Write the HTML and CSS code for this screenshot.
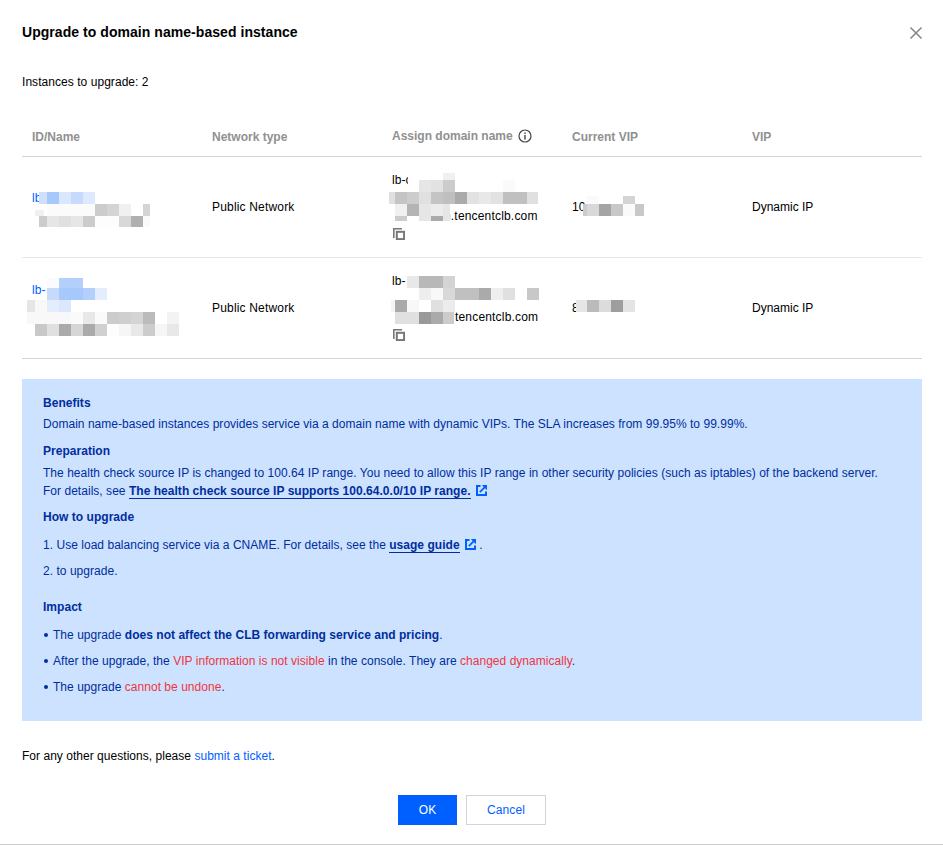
FILE: index.html
```html
<!DOCTYPE html>
<html lang="en">
<head>
<meta charset="utf-8">
<title>Upgrade to domain name-based instance</title>
<link rel="stylesheet" href="styles.css">
</head>
<body>
<main class="dialog">
  <header class="dialog-head">
    <h1 class="dialog-title">Upgrade to domain name-based instance</h1>
    <button class="close" aria-label="Close">
      <svg width="14" height="14" viewBox="0 0 14 14"><path d="M1.5 1.5l11 11M12.5 1.5l-11 11" stroke="#888" stroke-width="1.6" fill="none"/></svg>
    </button>
  </header>
  <p class="count">Instances to upgrade: 2</p>

  <table class="grid">
    <colgroup><col class="c"><col class="c"><col class="c"><col class="c"><col class="c"></colgroup>
    <thead>
      <tr>
        <th>ID/Name</th>
        <th>Network type</th>
        <th><span class="th-help">Assign domain name
          <svg width="14" height="14" viewBox="0 0 14 14"><circle cx="7" cy="7" r="6" fill="none" stroke="#444" stroke-width="1.2"/><rect x="6.3" y="6" width="1.4" height="4.6" fill="#444"/><rect x="6.3" y="3.4" width="1.4" height="1.5" fill="#444"/></svg></span></th>
        <th>Current VIP</th>
        <th>VIP</th>
      </tr>
    </thead>
    <tbody>
      <tr>
        <td><a class="link" href="#">lb</a><br>&nbsp;</td>
        <td class="wide">Public Network</td>
        <td class="domain">lb-c<br>&nbsp;<br><span class="gap gap-a"></span><span class="wide">n.tencentclb.com</span><br>
          <svg class="copy" width="12" height="12" viewBox="0 0 12 12"><path d="M0.8 10V0.8H9" fill="none" stroke="#777" stroke-width="1.6"/><rect x="3.8" y="3.8" width="7.3" height="7.3" fill="none" stroke="#777" stroke-width="2"/></svg>
        </td>
        <td>10</td>
        <td class="tight">Dynamic IP</td>
      </tr>
      <tr>
        <td><a class="link" href="#">lb-</a><br>&nbsp;<br>&nbsp;</td>
        <td class="wide">Public Network</td>
        <td class="domain">lb-<br>&nbsp;<br><span class="gap gap-b"></span><span class="wide">tencentclb.com</span><br>
          <svg class="copy" width="12" height="12" viewBox="0 0 12 12"><path d="M0.8 10V0.8H9" fill="none" stroke="#777" stroke-width="1.6"/><rect x="3.8" y="3.8" width="7.3" height="7.3" fill="none" stroke="#777" stroke-width="2"/></svg>
        </td>
        <td>8</td>
        <td class="tight">Dynamic IP</td>
      </tr>
    </tbody>
  </table>

  <section class="notice">
    <h2 class="n-title">Benefits</h2>
    <p class="n-first">Domain name-based instances provides service via a domain name with dynamic VIPs. The SLA increases from 99.95% to 99.99%.</p>
    <h2 class="n-title n-prep">Preparation</h2>
    <p class="n-health">The health check source IP is changed to 100.64 IP range. You need to allow this IP range in other security policies (such as iptables) of the backend server.<br>
    For details, see <a class="n-link" href="#">The health check source IP supports 100.64.0.0/10 IP range.</a>
    <svg class="ext" width="11" height="11" viewBox="0 0 11 11"><path d="M4.5 1H1v9h9V6.5" fill="none" stroke="#0060ff" stroke-width="2"/><path d="M3.8 7.2L8.8 2.2" fill="none" stroke="#0060ff" stroke-width="1.8"/><path d="M5.8 0h5.2v5.2z" fill="#0060ff"/></svg></p>
    <h2 class="n-title n-how">How to upgrade</h2>
    <p class="n-step1">1. Use load balancing service via a CNAME. For details, see the <a class="n-link" href="#">usage guide</a>
    <svg class="ext" width="11" height="11" viewBox="0 0 11 11"><path d="M4.5 1H1v9h9V6.5" fill="none" stroke="#0060ff" stroke-width="2"/><path d="M3.8 7.2L8.8 2.2" fill="none" stroke="#0060ff" stroke-width="1.8"/><path d="M5.8 0h5.2v5.2z" fill="#0060ff"/></svg> .</p>
    <p class="n-step2">2. to upgrade.</p>
    <h2 class="n-title n-impact">Impact</h2>
    <ul class="n-list">
      <li>The upgrade <strong>does not affect the CLB forwarding service and pricing</strong>.</li>
      <li>After the upgrade, the <span class="warn">VIP information is not visible</span> in the console. They are <span class="warn">changed dynamically</span>.</li>
      <li>The upgrade <span class="warn">cannot be undone</span>.</li>
    </ul>
  </section>

  <p class="help">For any other questions, please <a class="link" href="#">submit a ticket</a>.</p>

  <footer class="actions">
    <button class="btn btn-primary">OK</button>
    <button class="btn btn-ghost">Cancel</button>
  </footer>

  <svg class="mosaic" width="943" height="845" viewBox="0 0 943 845" aria-hidden="true" shape-rendering="crispEdges">
    <!-- row 1 id/name -->
    <rect x="39" y="192" width="8" height="12" fill="#cfe0fc"/><rect x="47" y="192" width="12" height="12" fill="#a6c8fb"/><rect x="59" y="192" width="12" height="12" fill="#dbe7fc"/><rect x="71" y="192" width="12" height="12" fill="#c6dbfb"/><rect x="83" y="192" width="12" height="12" fill="#dfe9fd"/>
    <rect x="47" y="204" width="48" height="12" fill="#fbfbfb"/><rect x="95" y="204" width="12" height="12" fill="#ccc"/><rect x="107" y="204" width="12" height="12" fill="#d4d4d4"/><rect x="119" y="204" width="12" height="12" fill="#f0f0f0"/><rect x="143" y="204" width="7" height="12" fill="#d4d4d4"/>
    <rect x="35" y="210" width="9" height="6" fill="#f0f0f0"/>
    <rect x="39" y="216" width="8" height="11" fill="#ccc"/><rect x="47" y="216" width="12" height="11" fill="#e6e6e6"/><rect x="59" y="216" width="12" height="11" fill="#e0e0e0"/><rect x="71" y="216" width="12" height="11" fill="#e6e6e6"/><rect x="83" y="216" width="12" height="11" fill="#ccc"/><rect x="95" y="216" width="24" height="11" fill="#fdfdfd"/><rect x="119" y="216" width="12" height="11" fill="#d8d8d8"/><rect x="131" y="216" width="12" height="11" fill="#b0b0b0"/><rect x="143" y="216" width="7" height="11" fill="#fafafa"/>
    <!-- row 2 id/name -->
    <rect x="47" y="278" width="12" height="10" fill="#fafaff"/><rect x="59" y="278" width="24" height="10" fill="#b3d0fc"/>
    <rect x="47" y="288" width="12" height="12" fill="#c6dbfb"/><rect x="59" y="288" width="24" height="12" fill="#a6c8fb"/><rect x="83" y="288" width="12" height="12" fill="#b3d0fc"/><rect x="95" y="288" width="12" height="12" fill="#e3edfd"/>
    <rect x="27" y="300" width="8" height="12" fill="#e6e6e6"/><rect x="35" y="300" width="12" height="12" fill="#f8f8f8"/><rect x="47" y="300" width="12" height="12" fill="#e3edfd"/><rect x="59" y="300" width="12" height="12" fill="#dbe7fc"/>
    <rect x="27" y="312" width="44" height="12" fill="#f8f8f8"/><rect x="71" y="312" width="12" height="12" fill="#fafafa"/><rect x="83" y="312" width="12" height="12" fill="#e8e8e8"/><rect x="95" y="312" width="12" height="12" fill="#fafafa"/><rect x="107" y="312" width="12" height="12" fill="#ccc"/><rect x="119" y="312" width="12" height="12" fill="#cfcfcf"/><rect x="131" y="312" width="12" height="12" fill="#d4d4d4"/><rect x="143" y="312" width="12" height="12" fill="#bbb"/><rect x="167" y="312" width="12" height="12" fill="#f3f3f3"/>
    <rect x="35" y="324" width="12" height="12" fill="#c8c8c8"/><rect x="47" y="324" width="12" height="12" fill="#e0e0e0"/><rect x="59" y="324" width="12" height="12" fill="#aaa"/><rect x="71" y="324" width="12" height="12" fill="#d6d6d6"/><rect x="83" y="324" width="12" height="12" fill="#aaa"/><rect x="95" y="324" width="12" height="12" fill="#d0d0d0"/><rect x="107" y="324" width="12" height="12" fill="#fdfdfd"/><rect x="119" y="324" width="12" height="12" fill="#f6f6f6"/><rect x="131" y="324" width="12" height="12" fill="#e8e8e8"/><rect x="143" y="324" width="12" height="12" fill="#ccc"/><rect x="155" y="324" width="12" height="12" fill="#f6f6f6"/><rect x="167" y="324" width="12" height="12" fill="#e8e8e8"/>
    <!-- row 1 domain -->
    <rect x="408" y="173" width="11" height="19" fill="#fff"/>
    <rect x="443" y="173" width="12" height="7" fill="#f0f0f0"/>
    <rect x="419" y="180" width="12" height="12" fill="#e6e6e6"/><rect x="431" y="180" width="12" height="12" fill="#e2e2e2"/><rect x="443" y="180" width="12" height="12" fill="#ccc"/><rect x="503" y="180" width="12" height="12" fill="#fafafa"/>
    <rect x="389" y="192" width="6" height="12" fill="#e0e0e0"/><rect x="395" y="192" width="12" height="12" fill="#c4c4c4"/><rect x="407" y="192" width="12" height="12" fill="#ccc"/><rect x="419" y="192" width="12" height="12" fill="#e0e0e0"/><rect x="431" y="192" width="12" height="12" fill="#c4c4c4"/><rect x="443" y="192" width="12" height="12" fill="#bfbfbf"/><rect x="455" y="192" width="12" height="12" fill="#aaa"/><rect x="467" y="192" width="12" height="12" fill="#e2e2e2"/><rect x="479" y="192" width="12" height="12" fill="#e8e8e8"/><rect x="491" y="192" width="12" height="12" fill="#e2e2e2"/><rect x="503" y="192" width="12" height="12" fill="#c0c0c0"/><rect x="515" y="192" width="12" height="12" fill="#c0c0c0"/><rect x="527" y="192" width="11" height="12" fill="#e0e0e0"/>
    <rect x="395" y="204" width="12" height="12" fill="#f0f0f0"/><rect x="407" y="204" width="12" height="12" fill="#b4b4b4"/><rect x="419" y="204" width="12" height="12" fill="#e6e6e6"/><rect x="431" y="204" width="12" height="12" fill="#ececec"/><rect x="443" y="204" width="7" height="12" fill="#e6e6e6"/>
    <rect x="395" y="216" width="12" height="5" fill="#ccc"/><rect x="407" y="216" width="12" height="5" fill="#fff"/><rect x="419" y="216" width="12" height="5" fill="#e6e6e6"/><rect x="431" y="216" width="12" height="5" fill="#aaa"/><rect x="443" y="216" width="7" height="5" fill="#e6e6e6"/>
    <rect x="443" y="221" width="7" height="4" fill="#fff"/>
    <!-- row 2 domain -->
    <rect x="407" y="276" width="12" height="12" fill="#e8e8e8"/><rect x="419" y="276" width="24" height="12" fill="#b8b8b8"/><rect x="443" y="276" width="12" height="12" fill="#d4d4d4"/>
    <rect x="407" y="288" width="12" height="12" fill="#fff"/><rect x="419" y="288" width="12" height="12" fill="#eee"/><rect x="431" y="288" width="12" height="12" fill="#f8f8f8"/><rect x="443" y="288" width="12" height="12" fill="#d8d8d8"/><rect x="455" y="288" width="24" height="12" fill="#c0c0c0"/><rect x="479" y="288" width="12" height="12" fill="#aaa"/><rect x="491" y="288" width="12" height="12" fill="#eee"/><rect x="503" y="288" width="12" height="12" fill="#e0e0e0"/><rect x="527" y="288" width="12" height="12" fill="#c8c8c8"/>
    <rect x="391" y="300" width="4" height="12" fill="#f4f4f4"/><rect x="395" y="300" width="12" height="12" fill="#aaa"/><rect x="407" y="300" width="12" height="12" fill="#f8f8f8"/><rect x="419" y="300" width="12" height="12" fill="#fff"/><rect x="431" y="300" width="12" height="12" fill="#e0e0e0"/><rect x="443" y="300" width="12" height="12" fill="#ececec"/>
    <rect x="395" y="312" width="24" height="12" fill="#e0e0e0"/><rect x="419" y="312" width="12" height="12" fill="#999"/><rect x="431" y="312" width="12" height="12" fill="#aaa"/><rect x="443" y="312" width="11" height="12" fill="#ccc"/>
    <!-- VIPs -->
    <rect x="587" y="196" width="12" height="8" fill="#fafafa"/><rect x="623" y="196" width="12" height="8" fill="#d4d4d4"/>
    <rect x="583" y="204" width="4" height="12" fill="#ccc"/><rect x="587" y="204" width="12" height="12" fill="#d8d8d8"/><rect x="599" y="204" width="12" height="12" fill="#a4a4a4"/><rect x="611" y="204" width="12" height="12" fill="#c8c8c8"/><rect x="623" y="204" width="12" height="12" fill="#fafafa"/><rect x="635" y="204" width="9" height="12" fill="#c8c8c8"/>
    <rect x="576" y="300" width="11" height="12" fill="#e6e6e6"/><rect x="587" y="300" width="12" height="12" fill="#bbb"/><rect x="599" y="300" width="12" height="12" fill="#dcdcdc"/><rect x="611" y="300" width="12" height="12" fill="#9e9e9e"/><rect x="623" y="300" width="12" height="12" fill="#e4e4e4"/>
  </svg>
</main>
</body>
</html>
```

FILE: styles.css
```css
* { box-sizing: border-box; }
html, body { margin: 0; height: 845px; overflow: hidden; background: #fff; }
body { font-family: "Liberation Sans", Arial, sans-serif; font-size: 12px; line-height: 18px; color: #000; letter-spacing: 0.05px; }
.dialog { position: relative; height: 845px; padding: 22px 21px 0 22px; border-bottom: 1px solid #ccc; }
.dialog-head { display: flex; justify-content: space-between; align-items: flex-start; height: 20px; }
.dialog-title { margin: 0; font-size: 14px; line-height: 20px; font-weight: 700; color: #000; }
.close { margin: 4px -1px 0 0; padding: 0; width: 14px; height: 14px; border: 0; background: none; line-height: 0; }
.count { margin: 31px 0 0; }
.grid { margin-top: 25px; width: 900px; table-layout: fixed; border-collapse: collapse; }
.c { width: 180px; }
.grid th { height: 40px; padding: 2px 10px 0; text-align: left; font-weight: 700; color: #909090; letter-spacing: 0; border-bottom: 1px solid #cfd5de; vertical-align: middle; }
.th-help { display: inline-flex; align-items: center; gap: 5px; position: relative; top: -1px; }
.grid td { height: 101px; padding: 0 10px; border-bottom: 1px solid #e5e8ed; vertical-align: middle; }
.grid tbody tr:last-child td { border-bottom-color: #cfd5de; }
.wide { letter-spacing: 0.18px; }
.tight { letter-spacing: 0; }
.domain { line-height: 18px; }
.gap { display: inline-block; height: 1px; }
.gap-a { width: 52px; }
.gap-b { width: 63px; }
.copy { display: block; margin: 3px 0 3px 1px; }
.link { color: #0060ff; text-decoration: none; }
.notice { margin-top: 20px; height: 342px; padding: 15px 21px 0; background: #cce2fe; color: #002da0; letter-spacing: 0.032px; }
.notice p { margin: 0; }
.n-title { margin: 0; font-size: 12px; line-height: 18px; font-weight: 700; }
.notice .n-first { margin-top: 3px; }
.n-prep { margin-top: 9px; }
.notice .n-health { margin-top: 4px; }
.n-how { margin-top: 8px; }
.notice .n-step1 { margin-top: 10px; }
.notice .n-step2 { margin-top: 8px; }
.n-impact { margin-top: 18px; }
.n-link { color: #002da0; font-weight: 700; text-decoration: none; border-bottom: 1px solid #002da0; }
.ext { vertical-align: -1px; margin-left: 2px; }
.n-list { margin: 10px 0 0; padding: 0; list-style: none; }
.n-list li { position: relative; padding-left: 10px; margin-bottom: 8px; }
.n-list li::before { content: ""; position: absolute; left: 1px; top: 7px; width: 4px; height: 4px; border-radius: 50%; background: #002da0; }
.warn { color: #f0353f; }
.help { margin: 26px 0 0; letter-spacing: 0.03px; }
.actions { margin-top: 30px; display: flex; justify-content: center; gap: 9px; }
.btn { height: 30px; padding: 0; font: 12px/18px "Liberation Sans", Arial, sans-serif; }
.btn-primary { width: 59px; border: 0; background: #0060ff; color: #fff; }
.btn-ghost { width: 80px; border: 1px solid #cfd5de; background: #fff; color: #0060ff; letter-spacing: 0.1px; }
.mosaic { position: absolute; left: 0; top: 0; pointer-events: none; }
```
